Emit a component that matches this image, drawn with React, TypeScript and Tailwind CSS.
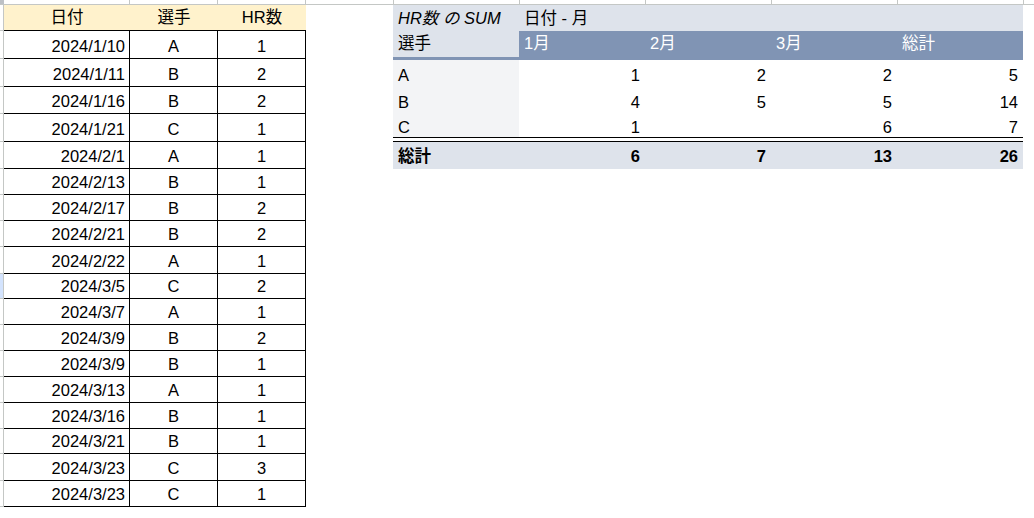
import React from "react";

const rows = [
  { d: "2024/1/10", p: "A", n: 1, h: "h-[28px]" },
  { d: "2024/1/11", p: "B", n: 2, h: "h-[28px]" },
  { d: "2024/1/16", p: "B", n: 2, h: "h-[27px]" },
  { d: "2024/1/21", p: "C", n: 1, h: "h-[28px]" },
  { d: "2024/2/1", p: "A", n: 1, h: "h-[27px]" },
  { d: "2024/2/13", p: "B", n: 1, h: "h-[26px]" },
  { d: "2024/2/17", p: "B", n: 2, h: "h-[26px]" },
  { d: "2024/2/21", p: "B", n: 2, h: "h-[26px]" },
  { d: "2024/2/22", p: "A", n: 1, h: "h-[27px]" },
  { d: "2024/3/5", p: "C", n: 2, h: "h-[25px]" },
  { d: "2024/3/7", p: "A", n: 1, h: "h-[26px]" },
  { d: "2024/3/9", p: "B", n: 2, h: "h-[26px]" },
  { d: "2024/3/9", p: "B", n: 1, h: "h-[26px]" },
  { d: "2024/3/13", p: "A", n: 1, h: "h-[26px]" },
  { d: "2024/3/16", p: "B", n: 1, h: "h-[26px]" },
  { d: "2024/3/21", p: "B", n: 1, h: "h-[25px]" },
  { d: "2024/3/23", p: "C", n: 3, h: "h-[27px]" },
  { d: "2024/3/23", p: "C", n: 1, h: "h-[26px]" },
];

const pivot = [
  { name: "A", vals: ["1", "2", "2", "5"], h: "h-[27px]", pb: "pb-[2px]" },
  { name: "B", vals: ["4", "5", "5", "14"], h: "h-[27px]", pb: "pb-[2px]" },
  { name: "C", vals: ["1", "", "6", "7"], h: "h-[23px]", pb: "pb-0" },
];

const topCols = ["w-[126px]", "w-[88px]", "w-[88px]", "w-[88px]", "w-[126px]", "w-[126px]", "w-[126px]", "w-[126px]", "w-[126px]"];

export default function App() {
  return (
    <div className="w-[1034px] h-[518px] overflow-hidden bg-white text-black font-['Liberation_Sans','Noto_Sans_CJK_JP',sans-serif] text-[16.5px] leading-[19px]">
      {/* column header strip */}
      <div className="flex h-[5px] border-b border-[#c4c7c5]">
        <div className="w-[4px] shrink-0 bg-[#bdc1c6]" />
        {topCols.map((w, i) => (
          <div key={i} className={`${w} shrink-0 border-r border-[#c4c7c5]`} />
        ))}
        <div className="flex-1" />
      </div>

      <div className="flex">
        {/* row header sliver */}
        <div className="w-[4px] shrink-0 flex flex-col border-r border-[#c4c7c5]">
          <div className="h-[26px] shrink-0 border-b border-[#c4c7c5]" />
          {rows.map((r, i) => (
            <div key={i} className={`${r.h} shrink-0 border-b border-[#c4c7c5] ${i === 9 ? "bg-[#d3e3fd]" : ""}`} />
          ))}
        </div>

        {/* data table */}
        <div className="w-[302px] shrink-0 flex flex-col">
          <div className="grid grid-cols-[126px_88px_88px] h-[26px] bg-[#fff2cc] border-b border-black">
            <div className="flex items-end justify-center pb-[3px]">日付</div>
            <div className="flex items-end justify-center pb-[3px]">選手</div>
            <div className="flex items-end justify-center pb-[3px]">HR数</div>
          </div>
          {rows.map((r, i) => (
            <div key={i} className={`grid grid-cols-[126px_88px_88px] ${r.h}`}>
              <div className="flex items-end justify-end pr-[4px] pb-[2px] border-r border-b border-black">{r.d}</div>
              <div className="flex items-end justify-center pb-[2px] border-r border-b border-black">{r.p}</div>
              <div className="flex items-end justify-center pb-[2px] border-r border-b border-black">{r.n}</div>
            </div>
          ))}
        </div>

        <div className="w-[87px] shrink-0" />

        {/* pivot table */}
        <div className="w-[630px] shrink-0 flex flex-col">
          <div className="grid grid-cols-[126px_504px] h-[26px] bg-[#dee3eb]">
            <div className="flex items-end pl-[5px] pb-[3px] italic">HR数 の SUM</div>
            <div className="flex items-end pl-[5px] pb-[3px]">日付 - 月</div>
          </div>
          <div className="grid grid-cols-[126px_126px_126px_126px_126px] h-[29px]">
            <div className="flex items-end pl-[5px] pb-[4px] bg-[#dee3eb] border-b-[3px] border-[#8094b4]">選手</div>
            {["1月", "2月", "3月", "総計"].map((m) => (
              <div key={m} className="flex items-end pl-[5px] pb-[7px] bg-[#8094b4] text-white">{m}</div>
            ))}
          </div>
          {pivot.map((r) => (
            <div key={r.name} className={`grid grid-cols-[126px_126px_126px_126px_126px] ${r.h}`}>
              <div className={`flex items-end pl-[5px] ${r.pb} bg-[#f3f4f6]`}>{r.name}</div>
              {r.vals.map((v, i) => (
                <div key={i} className={`flex items-end justify-end pr-[5px] ${r.pb}`}>{v}</div>
              ))}
            </div>
          ))}
          <div className="h-[5px] border-y border-black" />
          <div className="grid grid-cols-[126px_126px_126px_126px_126px] h-[27px] bg-[#dee3eb] font-bold">
            <div className="flex items-end pl-[5px] pb-[3px]">総計</div>
            {["6", "7", "13", "26"].map((v) => (
              <div key={v} className="flex items-end justify-end pr-[5px] pb-[3px]">{v}</div>
            ))}
          </div>
        </div>
      </div>
    </div>
  );
}
